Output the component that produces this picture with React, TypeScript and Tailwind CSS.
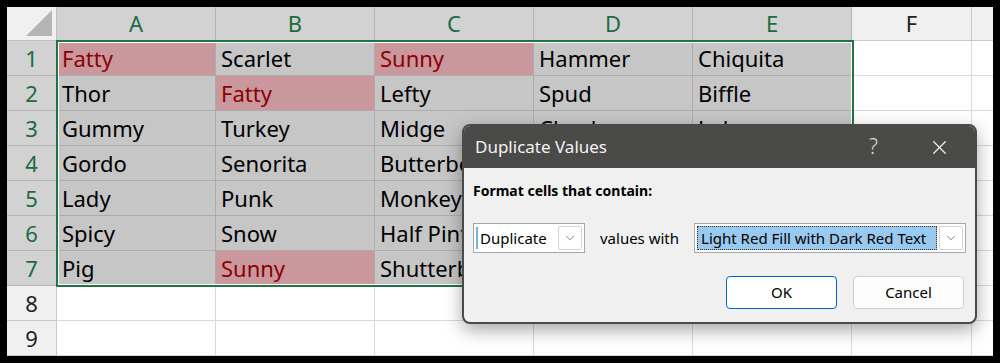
import { ChevronDown, X } from "lucide-react";

const cols = ["A", "B", "C", "D", "E"];

// second value marks a duplicate (light red fill, dark red text)
const rows: [string, boolean][][] = [
  [["Fatty", true], ["Scarlet", false], ["Sunny", true], ["Hammer", false], ["Chiquita", false]],
  [["Thor", false], ["Fatty", true], ["Lefty", false], ["Spud", false], ["Biffle", false]],
  [["Gummy", false], ["Turkey", false], ["Midge", false], ["Chucky", false], ["Lobo", false]],
  [["Gordo", false], ["Senorita", false], ["Butterbean", false], ["Tiny", false], ["Ace", false]],
  [["Lady", false], ["Punk", false], ["Monkey", false], ["Boo", false], ["Tank", false]],
  [["Spicy", false], ["Snow", false], ["Half Pint", false], ["Tootsie", false], ["Bear", false]],
  [["Pig", false], ["Sunny", true], ["Shutterbug", false], ["Dino", false], ["Doc", false]],
];

const font = { fontFamily: '"Noto Sans", "Open Sans", sans-serif' };

const SelectBox: React.FC<{ text: string; highlighted?: boolean; className: string }> = ({
  text,
  highlighted,
  className,
}) => (
  <div className={`flex items-center h-[30px] border border-[#a8a8a8] bg-white p-[2px] ${className}`}>
    {highlighted ? (
      <div className="flex-1 h-full flex items-center bg-[#99c9ef] border border-dotted border-[#333] px-[3px] text-[15px] text-black whitespace-nowrap overflow-hidden">
        {text}
      </div>
    ) : (
      <div className="flex-1 h-full flex items-center text-[15px] text-black whitespace-nowrap">
        <span className="w-[2px] h-[22px] bg-[#73b3e8] mr-[2px]" />
        {text}
      </div>
    )}
    <div className="ml-[2px] w-[24px] h-full flex items-center justify-center border border-[#d4d4d4] rounded-[2px] bg-white">
      <ChevronDown size={14} strokeWidth={1.2} color="#555" />
    </div>
  </div>
);

export default function App() {
  return (
    <div className="w-[1000px] h-[363px] bg-black pt-[7px] px-[7px] overflow-hidden" style={font}>
      <div className="relative w-[986px] h-[349px] bg-white overflow-hidden">
        <div className="grid grid-cols-[50px_159px_159px_159px_159px_159px_120px_1fr] grid-rows-[34px_repeat(9,35px)]">
          {/* corner */}
          <div className="relative bg-[#f0f0f0] border-r border-b border-[#c0c0c0]">
            <div className="absolute right-[4px] bottom-[4px] w-0 h-0 border-l-[26px] border-l-transparent border-b-[26px] border-b-[#b4b4b4]" />
          </div>
          {cols.map((c) => (
            <div
              key={c}
              className="bg-[#d2d2d2] border-r border-b border-[#b4b4b4] flex items-center justify-center text-[22px] text-[#1e6b41]"
            >
              {c}
            </div>
          ))}
          <div className="bg-[#f0f0f0] border-r border-b border-[#c8c8c8] flex items-center justify-center text-[22px] text-[#222]">
            F
          </div>
          <div className="bg-[#f0f0f0] border-b border-[#c8c8c8]" />

          {/* data rows */}
          {rows.map((row, i) => (
            <>
              <div
                key={`h${i}`}
                className="bg-[#d2d2d2] border-r border-b border-[#b4b4b4] flex items-center justify-center text-[22px] text-[#1e6b41]"
              >
                {i + 1}
              </div>
              {row.map(([name, dup], j) => (
                <div
                  key={`${i}-${j}`}
                  className={`border-r border-b border-[#acacac] flex items-center pl-[5px] text-[22px] whitespace-nowrap overflow-hidden ${
                    dup ? "bg-[#c9979c] text-[#8a0006]" : "bg-[#c6c6c6] text-black"
                  }`}
                >
                  {name}
                </div>
              ))}
              <div className="border-r border-b border-[#d9d9d9]" />
              <div className="border-b border-[#d9d9d9]" />
            </>
          ))}

          {/* empty rows */}
          {[8, 9].map((n) => (
            <>
              <div
                key={`h${n}`}
                className="bg-[#f0f0f0] border-r border-b border-[#c8c8c8] flex items-center justify-center text-[22px] text-[#222]"
              >
                {n}
              </div>
              {[0, 1, 2, 3, 4, 5].map((k) => (
                <div key={`${n}-${k}`} className="border-r border-b border-[#d9d9d9]" />
              ))}
              <div className="border-b border-[#d9d9d9]" />
            </>
          ))}
        </div>

        {/* selection outline A1:E7 */}
        <div className="absolute left-[49px] top-[33px] w-[798px] h-[247px] border-2 border-[#217346] pointer-events-none">
          <div className="w-full h-full border border-white" />
        </div>

        {/* dialog */}
        <div className="absolute left-[455px] top-[117px] w-[515px] h-[200px] rounded-[8px] border-2 border-[#4a4a48] bg-[#f0f0f0] overflow-hidden shadow-[0_6px_18px_rgba(0,0,0,0.35)] flex flex-col">
          <div className="h-[42px] bg-[#4a4a48] flex items-center pl-[11px] pr-[24px] text-[#f3f3f3]">
            <span className="flex-1 text-[17px]">Duplicate Values</span>
            <span className="text-[21px] font-light text-[#dcdcdc] mr-[50px]">?</span>
            <X size={23} strokeWidth={1.3} color="#f0f0f0" />
          </div>
          <div className="flex flex-col px-[9px]">
            <div className="mt-[12px] text-[14px] font-bold text-black">Format cells that contain:</div>
            <div className="mt-[22px] flex items-center">
              <SelectBox text="Duplicate" className="w-[112px]" />
              <span className="ml-[15px] text-[15px] text-black">values with</span>
              <SelectBox text="Light Red Fill with Dark Red Text" highlighted className="ml-[15px] w-[272px]" />
            </div>
            <div className="mt-[23px] flex justify-end gap-[16px] pr-[2px]">
              <button className="w-[111px] h-[33px] rounded-[4px] border border-[#0067c0] bg-white text-[15px] text-black">
                OK
              </button>
              <button className="w-[111px] h-[33px] rounded-[4px] border border-[#d0d0d0] bg-[#fdfdfd] text-[15px] text-black">
                Cancel
              </button>
            </div>
          </div>
        </div>
      </div>
    </div>
  );
}
